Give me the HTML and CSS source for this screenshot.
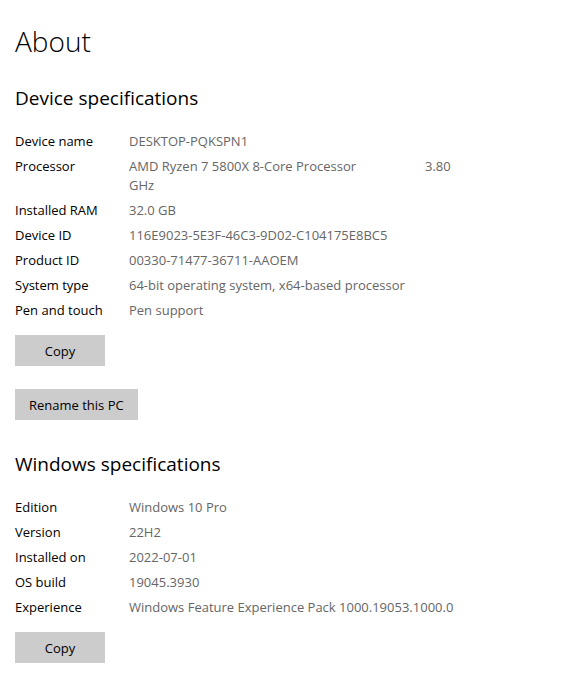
FILE: index.html
```html
<!DOCTYPE html>
<html lang="en">
<head>
<meta charset="utf-8">
<title>About</title>
<link rel="stylesheet" href="styles.css">
</head>
<body>
<main class="page">
  <h1 class="title">About</h1>

  <section class="section">
    <h2 class="section-title">Device specifications</h2>
    <dl class="specs">
      <dt>Device name</dt><dd>DESKTOP-PQKSPN1</dd>
      <dt>Processor</dt><dd><span class="cpu-name">AMD Ryzen 7 5800X 8-Core Processor</span>3.80<br>GHz</dd>
      <dt>Installed RAM</dt><dd>32.0 GB</dd>
      <dt>Device ID</dt><dd>116E9023-5E3F-46C3-9D02-C104175E8BC5</dd>
      <dt>Product ID</dt><dd>00330-71477-36711-AAOEM</dd>
      <dt>System type</dt><dd>64-bit operating system, x64-based processor</dd>
      <dt>Pen and touch</dt><dd>Pen support</dd>
    </dl>
    <div class="actions">
      <button class="btn btn-copy" type="button">Copy</button>
      <button class="btn" type="button">Rename this PC</button>
    </div>
  </section>

  <section class="section section-windows">
    <h2 class="section-title">Windows specifications</h2>
    <dl class="specs">
      <dt>Edition</dt><dd>Windows 10 Pro</dd>
      <dt>Version</dt><dd>22H2</dd>
      <dt>Installed on</dt><dd>2022-07-01</dd>
      <dt>OS build</dt><dd>19045.3930</dd>
      <dt>Experience</dt><dd>Windows Feature Experience Pack 1000.19053.1000.0</dd>
    </dl>
    <div class="actions">
      <button class="btn btn-copy" type="button">Copy</button>
    </div>
  </section>
</main>
</body>
</html>
```
FILE: styles.css
```css
* { box-sizing: border-box; }

html, body {
  margin: 0;
  padding: 0;
  background: #ffffff;
}

body {
  font-family: "Open Sans", "Noto Sans", sans-serif;
  color: #000000;
}

.page {
  padding: 23px 15px 0 15px;
}

.title {
  margin: 0;
  font-size: 28px;
  line-height: 36px;
  font-weight: 300;
  letter-spacing: 0;
}

.section {
  margin-top: 25px;
}

.section-title {
  margin: 0;
  font-size: 19px;
  line-height: 28px;
  font-weight: 400;
}

.specs {
  display: grid;
  grid-template-columns: 114px 330px;
  row-gap: 6px;
  margin: 20px 0 0 0;
  font-size: 13px;
  line-height: 19px;
}

.specs dt {
  margin: 0;
  color: #000000;
}

.specs dd {
  margin: 0;
  color: #666666;
}

.cpu-name {
  display: inline-block;
  width: 296px;
}

.actions {
  display: flex;
  flex-direction: column;
  align-items: flex-start;
  gap: 23px;
  margin-top: 15px;
}

.btn {
  font-family: inherit;
  font-size: 13px;
  line-height: 20px;
  color: #000000;
  background: #cccccc;
  border: 0;
  border-radius: 0;
  height: 31px;
  padding: 0 14px;
}

.btn-copy {
  width: 90px;
  padding: 0;
}

.section-windows {
  margin-top: 30px;
}
```
